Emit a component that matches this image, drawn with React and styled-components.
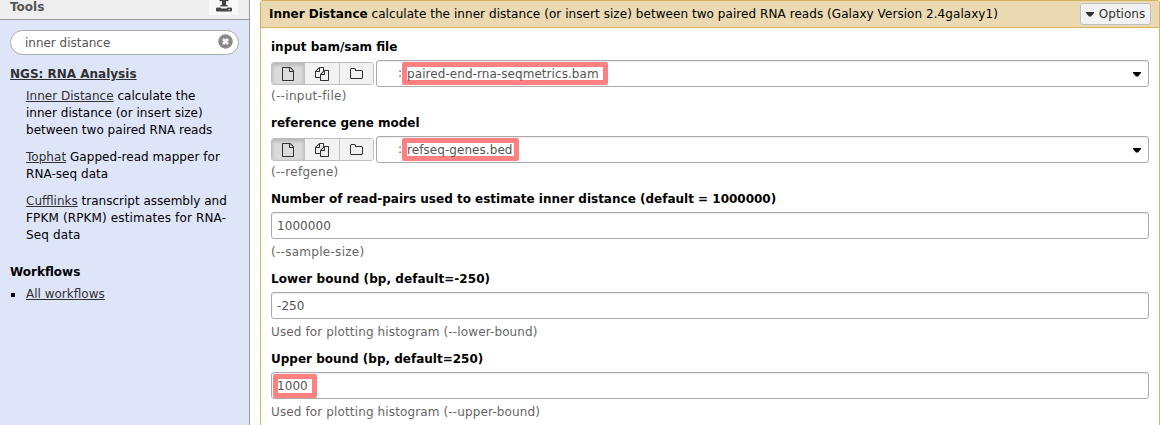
import React from "react";
import styled, { createGlobalStyle, css } from "styled-components";

const Global = createGlobalStyle`
  * { box-sizing: border-box; }
  body { margin: 0; background: #fff; overflow: hidden; font: 12px/17px "DejaVu Sans", Verdana, sans-serif; color: #000; }
`;
const Page = styled.div`display: flex; width: 1160px; height: 425px; overflow: hidden;`;
const Sidebar = styled.aside`width: 250px; flex: none; background: #dfe5f9; border-right: 1px solid #999;`;
const SideHead = styled.header`
  height: 20px; display: flex; justify-content: space-between; padding: 0 11px 0 10px;
  background: #eee; border-bottom: 1px solid #999; color: #555; font-weight: bold; line-height: 14px;
`;
const UploadButton = styled.span`width: 29px; height: 15px; background: #f8f8f8; display: flex; justify-content: center; overflow: hidden;`;
const Search = styled.div`
  margin: 10px 10px 0 10px; height: 25px; border: 1px solid #aaa; border-radius: 13px; background: #fff;
  display: flex; align-items: center; justify-content: space-between; padding: 0 5px 0 14px; color: #555;
  svg { margin-bottom: 2px; }
`;
const SearchText = styled.span`padding-top: 1px; letter-spacing: -0.02px;`;
const SectionLink = styled.a`display: block; margin: 11px 10px 5px; font-weight: bold; color: #303030; text-decoration: underline;`;
const Tool = styled.p`margin: 0 21px 10px 26px;`;
const Tracked = styled.span`letter-spacing: ${(p) => p.$ls}px;`;
const Link = styled.a`color: #303030; text-decoration: underline;`;
const Heading = styled.h2`margin: 20px 10px 5px; font-size: 12px; line-height: 17px;`;
const WorkflowRow = styled.div`display: flex; align-items: center; padding-left: 11px; gap: 11px;`;
const Bullet = styled.span`width: 4px; height: 4px; background: #000;`;
const Main = styled.main`flex: 1; margin-left: 10px; border: 1px solid #d6b161; border-bottom: 0; border-radius: 3px 3px 0 0;`;
const FormHead = styled.header`
  height: 27px; background: #ebd9b2; border-bottom: 1px solid #d6b161; display: flex; align-items: center;
  justify-content: space-between; padding: 0 8px;
`;
const Options = styled.button`
  height: 22px; width: 71px; background: #f2f2f2; border: 1px solid #bfbfbf; border-radius: 3px; color: #333;
  font: 12px/17px "DejaVu Sans", sans-serif; padding: 0; display: flex; align-items: center; justify-content: center; gap: 5px;
`;
const Form = styled.div`padding: 11px 10px 0;`;
const Field = styled.section`margin-bottom: 10px;`;
const Label = styled.div`font-weight: bold; height: 17px; margin-bottom: 4px; letter-spacing: ${(p) => p.$ls || 0}px;`;
const Controls = styled.div`display: flex; gap: 2px; height: 27px;`;
const Group = styled.div`
  display: grid; grid-template-columns: 32px 35px 34px; width: 103px; height: 23px; margin-top: 2px;
  border: 1px solid #bfbfbf; border-radius: 3px; overflow: hidden;
`;
const Choice = styled.span`
  display: flex; align-items: center; justify-content: center; background: #f2f2f2; color: #303030;
  & + & { border-left: 1px solid #bfbfbf; }
  ${(p) => p.$active && css`background: #dcdcdc; box-shadow: inset 0 2px 4px rgba(0,0,0,.2);`}
`;
const Input = styled.div`
  flex: 1; height: 27px; border: 1px solid #aaa; border-radius: 3px; background: #fff; color: #555;
  display: flex; align-items: center; padding: 0 ${(p) => (p.$select ? 7 : 6)}px 0 ${(p) => (p.$select ? 21 : 5)}px;
  box-shadow: inset 0 1px 1px rgba(0,0,0,.075);
`;
const Value = styled.span`flex: 1; display: flex; align-items: center;`;
const Mark = styled.span`
  height: ${(p) => p.$h || 23}px; display: flex; align-items: center; flex: none; white-space: nowrap;
  padding-top: 1px; letter-spacing: 0.06px;
  ${(p) => p.$w && css`width: ${p.$w}px; border: ${p.$b}px solid #ff8080; border-radius: 2px; margin-left: ${p.$ml}px; text-indent: ${p.$ml ? -1 : 0}px;`}
`;
const Help = styled.div`color: #666; height: 17px; margin-top: ${(p) => (p.$file ? 1 : 5)}px; letter-spacing: ${(p) => p.$ls}px;`;

const paths = {
  file: ["0 0 1536 1792", "M1468 380q28 28 48 76t20 88v1152q0 40-28 68t-68 28h-1344q-40 0-68-28t-28-68v-1600q0-40 28-68t68-28h896q40 0 88 20t76 48zm-444-244v376h376q-10-29-22-41l-313-313q-12-12-41-22zm384 1528v-1024h-416q-40 0-68-28t-28-68v-416h-768v1536h1280z"],
  files: ["0 0 1792 1792", "M1696 384q40 0 68 28t28 68v1216q0 40-28 68t-68 28h-960q-40 0-68-28t-28-68v-288h-544q-40 0-68-28t-28-68v-672q0-40 20-88t48-76l408-408q28-28 76-48t88-20h416q40 0 68 28t28 68v328q68-40 128-40h416zm-544 213l-299 299h299v-299zm-640-384l-299 299h299v-299zm196 647l316-316v-416h-384v416q0 40-28 68t-68 28h-416v640h512v-256q0-40 20-88t48-76zm956 804v-1152h-384v416q0 40-28 68t-68 28h-416v640h896z"],
  folder: ["0 0 1664 1792", "M1536 1312v-704q0-40-28-68t-68-28h-704q-40 0-68-28t-28-68v-64q0-40-28-68t-68-28h-320q-40 0-68 28t-28 68v960q0 40 28 68t68 28h1216q40 0 68-28t28-68zm128-704v704q0 92-66 158t-158 66h-1216q-92 0-158-66t-66-158v-960q0-92 66-158t158-66h320q92 0 158 66t66 158v32h672q92 0 158 66t66 158z"],
};
const Icon = ({ name }) => (
  <svg height="14" width={{ file: 12, files: 14, folder: 13 }[name]} viewBox={paths[name][0]}><path fill="currentColor" d={paths[name][1]} /></svg>
);
const CaretSvg = styled.svg`margin-top: 1px;`;
const Caret = ({ color = "#000" }) => <CaretSvg width="8" height="5" viewBox="0 0 8 5"><path d="M0 0h8v1L5 4.5H3L0 1z" fill={color} /></CaretSvg>;

const FileField = ({ label, value, help, width }) => (
  <Field>
    <Label>{label}</Label>
    <Controls>
      <Group><Choice $active><Icon name="file" /></Choice><Choice><Icon name="files" /></Choice><Choice><Icon name="folder" /></Choice></Group>
      <Input $select><Value>:<Mark $w={width} $b={5} $ml={0}>{value}</Mark></Value><Caret /></Input>
    </Controls>
    <Help $file $ls={0.3}>{help}</Help>
  </Field>
);
const TextField = ({ label, value, help, mark, ls, labelLs }) => (
  <Field>
    <Label $ls={labelLs}>{label}</Label>
    <Input><Mark $w={mark} $h={mark && 24} $b={5} $ml={-4}>{value}</Mark></Input>
    <Help $ls={ls}>{help}</Help>
  </Field>
);

export default function App() {
  return (
    <Page>
      <Global />
      <Sidebar>
        <SideHead>Tools
          <UploadButton>
            <svg width="16" height="12" viewBox="0 0 16 12"><path fill="#444" d="M3.5 0h9v1.2H10V5h1.5v1.4h-7V5H6V1.2H3.500zM1 7.500h3.500l.8 1h5.400l.8-1H15l1 1v2.500l-1 .5H1l-1-.5V8.500z" /><path fill="#eee" d="M12.500 9.300h1.500v1h-1.500z" /></svg>
          </UploadButton>
        </SideHead>
        <Search><SearchText>inner distance</SearchText>
          <svg width="15" height="15" viewBox="0 0 15 15"><circle cx="7.5" cy="7.5" r="7.2" fill="#888" /><path d="M5 5l5 5M10 5l-5 5" stroke="#fff" strokeWidth="2.6" /></svg>
        </Search>
        <SectionLink>NGS: RNA Analysis</SectionLink>
        <Tool><Tracked $ls={0.02}><Link>Inner Distance</Link> calculate the inner distance (or insert size) between two paired RNA reads</Tracked></Tool>
        <Tool><Tracked $ls={0.04}><Link>Tophat</Link> Gapped-read mapper for RNA-seq data</Tracked></Tool>
        <Tool><Link>Cufflinks</Link> transcript assembly and <Tracked $ls={0.14}>FPKM (RPKM) estimates for RNA-Seq data</Tracked></Tool>
        <Heading>Workflows</Heading>
        <WorkflowRow><Bullet /><Link>All workflows</Link></WorkflowRow>
      </Sidebar>
      <Main>
        <FormHead>
          <span><b>Inner Distance</b><Tracked $ls={0.06}> calculate the inner distance (or insert size) between two paired RNA reads (Galaxy Version 2.4galaxy1)</Tracked></span>
          <Options><Caret color="#303030" />Options</Options>
        </FormHead>
        <Form>
          <FileField label="input bam/sam file" value="paired-end-rna-seqmetrics.bam" help="(--input-file)" width={206} />
          <FileField label="reference gene model" value="refseq-genes.bed" help="(--refgene)" width={117} />
          <TextField label="Number of read-pairs used to estimate inner distance (default = 1000000)" value="1000000" help="(--sample-size)" ls={0.28} />
          <TextField label="Lower bound (bp, default=-250)" labelLs={0.06} value="-250" help="Used for plotting histogram (--lower-bound)" ls={0.13} />
          <TextField label="Upper bound (bp, default=250)" value="1000" help="Used for plotting histogram (--upper-bound)" ls={0.13} mark={44} />
        </Form>
      </Main>
    </Page>
  );
}
